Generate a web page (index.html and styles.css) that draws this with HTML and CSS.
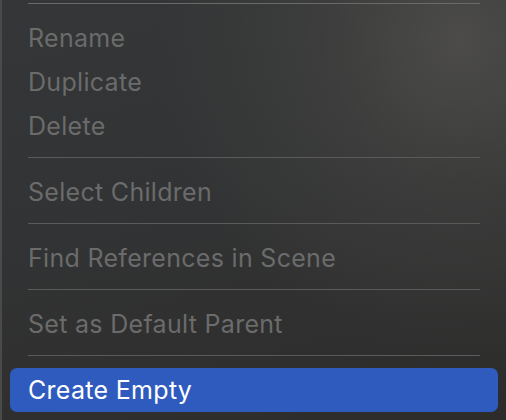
FILE: index.html
```html
<!DOCTYPE html>
<html lang="en">
<head>
<meta charset="utf-8">
<title>Context Menu</title>
<link rel="stylesheet" href="styles.css">
</head>
<body>
<div class="menu">
  <div class="sep sep-top"></div>
  <div class="item disabled">Rename</div>
  <div class="item disabled">Duplicate</div>
  <div class="item disabled">Delete</div>
  <div class="sep"></div>
  <div class="item disabled">Select Children</div>
  <div class="sep"></div>
  <div class="item disabled">Find References in Scene</div>
  <div class="sep"></div>
  <div class="item disabled">Set as Default Parent</div>
  <div class="sep"></div>
  <div class="item active">Create Empty</div>
</div>
</body>
</html>
```
FILE: styles.css
```css
html, body {
  margin: 0;
  padding: 0;
  height: 100%;
}
body {
  background:
    radial-gradient(ellipse 300px 320px at 460px 40px, rgba(80,79,76,0.85) 0%, rgba(68,68,66,0.55) 45%, rgba(60,60,60,0) 100%),
    linear-gradient(165deg, #343637 0%, #323334 45%, #2d2c2b 100%);
  font-family: "Inter", "Noto Sans", sans-serif;
  overflow: hidden;
}
.menu {
  height: 420px;
  box-sizing: border-box;
  border-left: 2px solid #4a4a4a;
  padding-top: 3px;
  display: flex;
  flex-direction: column;
}
.sep {
  height: 1px;
  background: #5a5a5a;
  margin: 9px 26px 12px 26px;
  flex: none;
}
.sep-top {
  margin-top: 0;
  background: #6a6a68;
}
.item {
  height: 44px;
  display: flex;
  align-items: center;
  padding-left: 26px;
  font-size: 25px;
  font-weight: 400;
  letter-spacing: 0.3px;
  flex: none;
}
.disabled {
  color: #6b6b6b;
}
.active {
  color: #ffffff;
  background: #2f5bbf;
  border-radius: 7px;
  margin: 0 8px 0 8px;
  padding-left: 18px;
}
```
